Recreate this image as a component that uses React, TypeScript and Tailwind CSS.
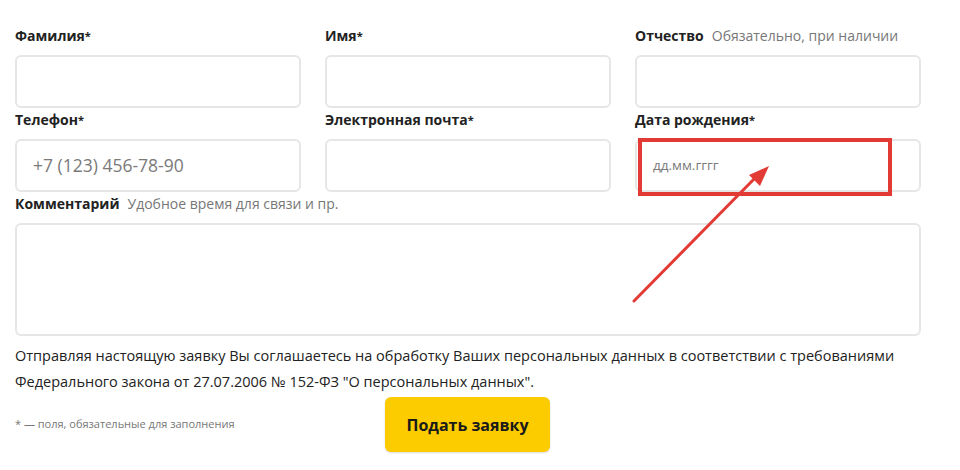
import React from "react";

const font = { fontFamily: '"Open Sans", "Liberation Sans", sans-serif' };

function Label({ title, hint, req }: { title: string; hint?: string; req?: boolean }) {
  return (
    <div className="h-[31px] pt-[2px] text-[14px] leading-[20px] whitespace-nowrap">
      <span className="font-bold text-[#222]">{title}</span>
      {req && <span className="font-bold text-[#222] text-[11px] align-top">*</span>}
      {hint && <span className="ml-[8px] text-[#777]">{hint}</span>}
    </div>
  );
}

function Field({ placeholder, small }: { placeholder?: string; small?: boolean }) {
  return (
    <div className="h-[53px] rounded-[6px] border-2 border-[#e6e6e6] bg-white flex items-center">
      {placeholder && (
        <span className={small ? "pl-[16px] text-[13.5px] text-[#7a7a7a]" : "pl-[16px] text-[17.5px] text-[#7a7a7a]"}>
          {placeholder}
        </span>
      )}
    </div>
  );
}

export default function App() {
  return (
    <div className="relative w-[960px] h-[470px] bg-white overflow-hidden" style={font}>
      <div className="pl-[15px] pt-[24px] w-[921px]">
        <div className="grid grid-cols-3 gap-x-[24px]">
          <div>
            <Label title="Фамилия" req />
            <Field />
          </div>
          <div>
            <Label title="Имя" req />
            <Field />
          </div>
          <div>
            <Label title="Отчество" hint="Обязательно, при наличии" />
            <Field />
          </div>
          <div>
            <Label title="Телефон" req />
            <Field placeholder="+7 (123) 456-78-90" />
          </div>
          <div>
            <Label title="Электронная почта" req />
            <Field />
          </div>
          <div>
            <Label title="Дата рождения" req />
            <Field placeholder="дд.мм.гггг" small />
          </div>
        </div>
        <Label title="Комментарий" hint="Удобное время для связи и пр." />
        <div className="h-[113px] rounded-[6px] border-2 border-[#e6e6e6] bg-white" />
        <p className="mt-[7px] text-[14.5px] leading-[26px] text-[#222]">
          Отправляя настоящую заявку Вы соглашаетесь на обработку Ваших персональных данных в соответствии с требованиями
          Федерального закона от 27.07.2006 № 152-ФЗ "О персональных данных".
        </p>
        <div className="flex items-center mt-[2px]">
          <div className="w-[370px] text-[11px] text-[#777]">* — поля, обязательные для заполнения</div>
          <button className="w-[165px] h-[55px] rounded-[6px] bg-[#fccb00] text-[16px] font-bold text-[#1a1a1a] shadow-[0_1px_2px_rgba(0,0,0,0.15)]">
            Подать заявку
          </button>
        </div>
      </div>
      <svg className="absolute left-0 top-0 pointer-events-none" width="960" height="470">
        <rect x="640" y="140" width="250" height="54" fill="none" stroke="#e23b36" strokeWidth="4" />
        <line x1="634" y1="301" x2="755" y2="178" stroke="#e23b36" strokeWidth="3" strokeLinecap="round" />
        <polygon points="769,166 760,186 749,175" fill="#e23b36" />
      </svg>
    </div>
  );
}
